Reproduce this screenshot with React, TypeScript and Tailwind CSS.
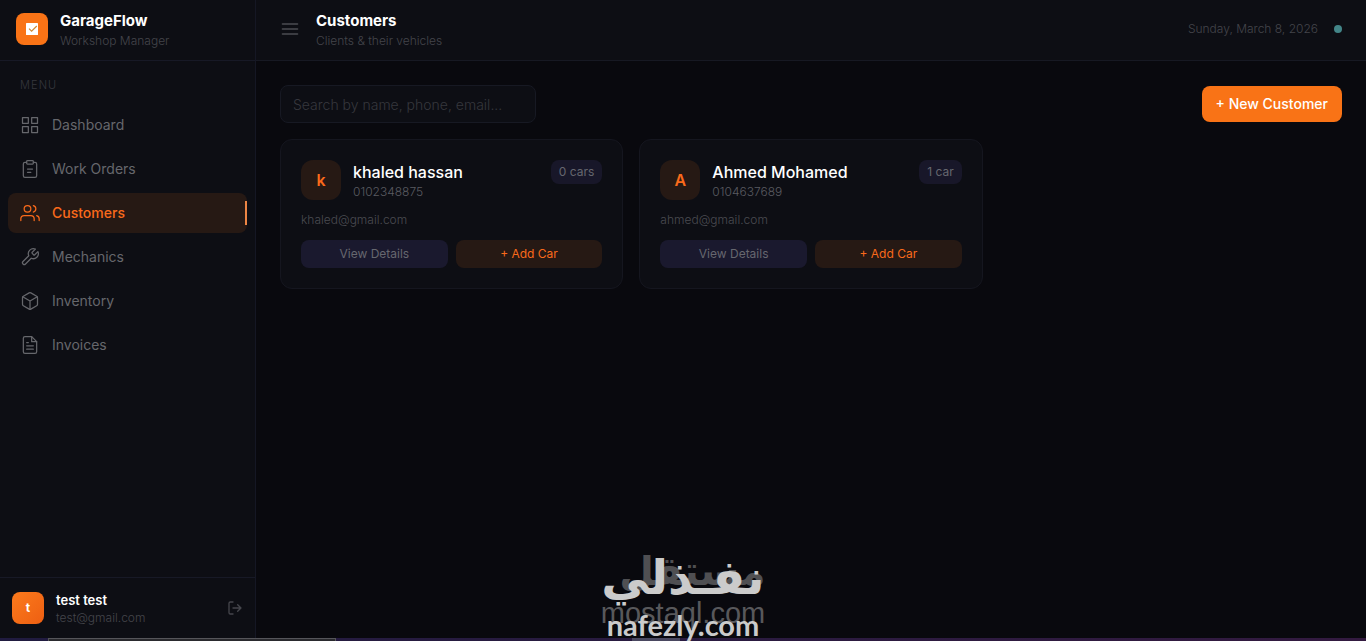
import type { ReactNode } from 'react';

function Icon({ children, className = 'size-5', width = 1.5 }: { children: ReactNode; className?: string; width?: number }) {
  return (
    <svg
      viewBox="0 0 24 24"
      className={className}
      fill="none"
      stroke="currentColor"
      strokeWidth={width}
      strokeLinecap="round"
      strokeLinejoin="round"
      aria-hidden="true"
    >
      {children}
    </svg>
  );
}

type NavItem = { label: string; icon: ReactNode; active?: boolean };

const nav: NavItem[] = [
  {
    label: 'Dashboard',
    icon: (
      <>
        <rect x="3" y="3" width="7" height="7" />
        <rect x="14" y="3" width="7" height="7" />
        <rect x="14" y="14" width="7" height="7" />
        <rect x="3" y="14" width="7" height="7" />
      </>
    ),
  },
  {
    label: 'Work Orders',
    icon: (
      <>
        <path d="M16 4h2a2 2 0 0 1 2 2v14a2 2 0 0 1-2 2H6a2 2 0 0 1-2-2V6a2 2 0 0 1 2-2h2" />
        <rect x="8" y="2" width="8" height="4" rx="1" />
        <path d="M9 12h6M9 16h4" />
      </>
    ),
  },
  {
    label: 'Customers',
    active: true,
    icon: (
      <>
        <path d="M17 21v-2a4 4 0 0 0-4-4H5a4 4 0 0 0-4 4v2" />
        <circle cx="9" cy="7" r="4" />
        <path d="M23 21v-2a4 4 0 0 0-3-3.87M16 3.13a4 4 0 0 1 0 7.75" />
      </>
    ),
  },
  {
    label: 'Mechanics',
    icon: (
      <path d="M14.7 6.3a1 1 0 0 0 0 1.4l1.6 1.6a1 1 0 0 0 1.4 0l3.77-3.77a6 6 0 0 1-7.94 7.94l-6.91 6.91a2.12 2.12 0 0 1-3-3l6.91-6.91a6 6 0 0 1 7.94-7.94l-3.76 3.76z" />
    ),
  },
  {
    label: 'Inventory',
    icon: (
      <>
        <path d="M21 16V8a2 2 0 0 0-1-1.73l-7-4a2 2 0 0 0-2 0l-7 4A2 2 0 0 0 3 8v8a2 2 0 0 0 1 1.73l7 4a2 2 0 0 0 2 0l7-4A2 2 0 0 0 21 16z" />
        <path d="M3.27 6.96 12 12.01l8.73-5.05M12 22.08V12" />
      </>
    ),
  },
  {
    label: 'Invoices',
    icon: (
      <>
        <path d="M14 2H6a2 2 0 0 0-2 2v16a2 2 0 0 0 2 2h12a2 2 0 0 0 2-2V8z" />
        <path d="M14 2v6h6M16 13H8M16 17H8M10 9H8" />
      </>
    ),
  },
];

const customers = [
  { name: 'khaled hassan', phone: '0102348875', email: 'khaled@gmail.com', cars: '0 cars' },
  { name: 'Ahmed Mohamed', phone: '0104637689', email: 'ahmed@gmail.com', cars: '1 car' },
];

function Sidebar() {
  return (
    <aside className="flex w-64 shrink-0 flex-col border-r border-[#151724] bg-[#0d0e14]">
      <div className="flex h-[61px] items-center gap-3 border-b border-[#171926] px-4 pb-0.5">
        <div className="flex size-8 items-center justify-center rounded-lg bg-[#f97316]">
          <svg viewBox="0 0 12 12" className="size-3" aria-hidden="true">
            <rect width="12" height="12" rx="0.6" fill="#fff" />
            <path d="M3 5.6 5.6 8.2 10.8 3" fill="none" stroke="#d08a35" strokeWidth="1.2" />
          </svg>
        </div>
        <div className="mt-1">
          <div className="text-[15px] leading-5 font-bold text-white">GarageFlow</div>
          <div className="text-xs leading-5 font-light text-[#44454b]">Workshop Manager</div>
        </div>
      </div>
      <nav className="flex-1 px-2 pt-4">
        <div className="px-3 text-[11px] leading-4 font-light tracking-widest text-[#36373d]">MENU</div>
        <ul className="mt-3 flex flex-col gap-1">
          {nav.map((item) => (
            <li key={item.label}>
              <a
                href="#"
                className={
                  item.active
                    ? 'relative flex h-10 items-center gap-3 rounded-lg bg-[#261914] px-3 text-sm font-medium text-[#f96a1b]'
                    : 'flex h-10 items-center gap-3 rounded-lg px-3 text-sm text-[#66676c]'
                }
              >
                <Icon>{item.icon}</Icon>
                {item.label}
                {item.active && <span className="absolute top-2 right-0 h-6 w-0.5 bg-[#ed8544]" />}
              </a>
            </li>
          ))}
        </ul>
      </nav>
      <div className="flex items-center gap-3 border-t border-[#171926] px-3 pt-3 pb-[15px]">
        <div className="flex size-8 items-center justify-center rounded-lg bg-linear-to-br from-[#fb7a1c] to-[#ee5f12] text-xs font-bold text-white">
          t
        </div>
        <div className="flex-1">
          <div className="text-[13px] leading-5 font-semibold text-white">test test</div>
          <div className="text-xs leading-4 font-light text-[#44454b]">test@gmail.com</div>
        </div>
        <button type="button" aria-label="Log out" className="text-[#45464c]">
          <Icon className="size-4" width={2}>
            <path d="M9 21H5a2 2 0 0 1-2-2V5a2 2 0 0 1 2-2h4M16 17l5-5-5-5M21 12H9" />
          </Icon>
        </button>
      </div>
    </aside>
  );
}

function Watermark() {
  return (
    <div className="pointer-events-none absolute bottom-0 left-1/2 h-24 w-[165px] -translate-x-1/2 text-center whitespace-nowrap">
      <div lang="ar" dir="rtl" className="absolute inset-x-0 top-0 text-right font-['DejaVu_Sans',sans-serif] text-[40px] leading-[52px] font-bold text-[#4f4f52]">
        مستقل
      </div>
      <div className="absolute inset-x-0 top-[52px] font-['Liberation_Sans',sans-serif] text-[29px] leading-8 text-[#58585b]">mostaql.com</div>
      <div lang="ar" dir="rtl" className="absolute inset-x-0 top-0 font-['DejaVu_Sans',sans-serif] text-[48px] leading-[64px] font-bold text-[#cbcbcb]">
        نفـذلي
      </div>
      <div className="absolute inset-x-0 top-[64px] font-['Lato',sans-serif] text-[29px] leading-8 font-bold text-[#cbcbcb]">nafezly.com</div>
    </div>
  );
}

export default function App() {
  return (
    <div className="relative flex min-h-screen overflow-hidden bg-[#09090e] font-['Inter',sans-serif] text-white">
      <Sidebar />
      <div className="flex min-w-0 flex-1 flex-col">
        <header className="flex h-[61px] items-center justify-between border-b border-[#171923] bg-[#0d0e14] px-6 pb-0.5">
          <div className="flex items-center gap-4">
            <button type="button" aria-label="Toggle menu" className="text-[#4b4c52]">
              <Icon width={2}>
                <path d="M3 6h18M3 12h18M3 18h18" />
              </Icon>
            </button>
            <div className="mt-1">
              <h1 className="text-[15px] leading-5 font-bold">Customers</h1>
              <p className="text-xs leading-5 font-light text-[#44454b]">Clients &amp; their vehicles</p>
            </div>
          </div>
          <div className="flex items-center gap-4">
            <span className="text-xs font-light text-[#44454b]">Sunday, March 8, 2026</span>
            <span className="size-2 rounded-full bg-[#438588]" />
          </div>
        </header>
        <main className="flex flex-1 flex-col gap-4 p-6">
          <div className="flex items-center justify-between">
            <input
              type="search"
              aria-label="Search customers"
              placeholder="Search by name, phone, email..."
              className="h-[38px] w-64 rounded-lg border border-[#171923] bg-[#0d0e14] px-3 text-sm font-light placeholder:text-[#36373d]"
            />
            <button type="button" className="h-9 rounded-lg bg-[#f97316] px-3.5 text-sm font-medium text-white">
              + New Customer
            </button>
          </div>
          <div className="grid grid-cols-3 gap-4">
            {customers.map((c) => (
              <article key={c.email} className="flex flex-col gap-3 rounded-xl border border-[#15161f] bg-[#0d0e14] p-5">
                <div className="flex items-start gap-3">
                  <div className="flex size-10 items-center justify-center rounded-xl bg-[#261914] text-base font-semibold text-[#f96a1b]">
                    {c.name[0]}
                  </div>
                  <div className="flex-1">
                    <h2 className="text-base leading-6 font-medium">{c.name}</h2>
                    <p className="text-xs leading-4 font-light text-[#5a5b61]">{c.phone}</p>
                  </div>
                  <span className="rounded-lg bg-[#181729] px-2 py-1 text-xs leading-4 text-[#66676f]">{c.cars}</span>
                </div>
                <p className="text-xs leading-4 font-light text-[#4a4b51]">{c.email}</p>
                <div className="grid grid-cols-2 gap-2">
                  <button type="button" className="h-7 rounded-lg bg-[#1a192e] text-xs text-[#66676f]">
                    View Details
                  </button>
                  <button type="button" className="h-7 rounded-lg bg-[#261914] text-xs text-[#f96a1b]">
                    + Add Car
                  </button>
                </div>
              </article>
            ))}
          </div>
        </main>
      </div>
      <div className="absolute inset-x-0 bottom-0 h-[3px] bg-linear-to-r from-[#201b40] to-[#331a40]" />
      <div className="absolute bottom-0 left-12 h-[3px] w-72 border border-b-0 border-[#55555a] bg-[#2a2a2e]" />
      <div className="absolute bottom-0 left-[632px] h-[3px] w-12 bg-[#4a4860]" />
      <Watermark />
    </div>
  );
}
